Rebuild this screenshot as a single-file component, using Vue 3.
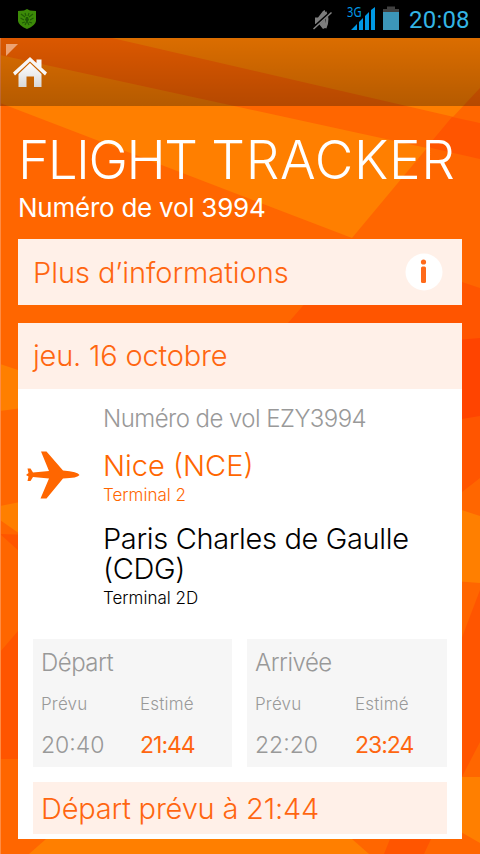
<template>
  <div class="screen">
    <svg class="backdrop" viewBox="0 0 480 854" width="480" height="854">
      <rect width="480" height="854" fill="#ff6600" />
      <polygon points="112,38 480,38 480,123" fill="#ff7f00" />
      <polygon points="0,55 427,148 352,238 0,103" fill="#ff7f00" />
      <polygon points="480,88 451,119 480,123" fill="#ff6600" />
      <polygon points="452,117 480,123 480,159 427,147" fill="#ff5500" />
      <polygon points="288,323 360,240 462,282 480,288 480,478 462,492 288,492" fill="#ff5500" />
      <polygon points="400,345 480,338 480,416 400,429" fill="#ff4400" />
      <polygon points="440,503 480,516 480,583 440,580" fill="#ff7f00" />
      <polygon points="480,590 450,669 450,800 480,742" fill="#ff5500" />
      <polygon points="440,777 480,777 480,843 440,820" fill="#ff7f00" />
      <polygon points="46,839 352,839 369,854 29,854" fill="#ff7f00" />
      <polygon points="390,839 431,839 424,854 384,854" fill="#ff5500" />
      <polygon points="0,364 30,374 30,407 0,411" fill="#ff7f00" />
      <polygon points="0,506 30,500 30,541 0,520" fill="#ff7f00" />
      <polygon points="0,534 30,535 30,561" fill="#ff5500" />
      <polygon points="0,652 30,617 30,759 0,759" fill="#ff5500" />
      <rect width="1" height="854" fill="#ff8c44" />
    </svg>

    <div class="statusbar">
      <svg class="shield" width="20" height="22" viewBox="0 0 20 22">
        <path d="M10 1 L13 2.4 L19 3 V13 Q18.500 17.500 10 21 Q1.500 17.500 1 13 V3 L7 2.400 Z" fill="#3c8a08" />
        <path d="M4 6 L8 9 M16 6 L12 9 M3.500 10 L7 12 M16.500 10 L13 12 M5 15 L8 14 M15 15 L12 14 M8 5 L9 8 M12 5 L11 8 M8 17 L10 13 L12 17" stroke="#1f5c05" stroke-width="1.200" fill="none" />
        <path d="M9 9 H11 L12 12 L10 14 L8 12 Z" fill="#1c5704" />
      </svg>
      <svg class="mute" width="20" height="22" viewBox="0 0 20 22">
        <path d="M2 8.500 H5 L10 2 L12 1 V19 L10 20 L6 15 H2 Z" fill="#7d7d7d" />
        <path d="M12 3 Q16 10 12 19" stroke="#7d7d7d" stroke-width="3" fill="none" />
        <path d="M0 19 L18 3" stroke="#000" stroke-width="2.500" />
        <path d="M0.500 20 L18.500 3.500" stroke="#858585" stroke-width="1.500" />
      </svg>
      <svg class="signal" width="29" height="30" viewBox="0 0 29 30">
        <text x="0" y="16" textLength="14.500" lengthAdjust="spacingAndGlyphs">3G</text>
        <path d="M4 29 L10 23 V29 Z M12 21 L16 17 V29 H12 Z M18 15 L22 11 V29 H18 Z M24 9 L28 6 V29 H24 Z" fill="#0099e5" />
      </svg>
      <svg class="battery" width="16" height="24" viewBox="0 0 16 24">
        <path d="M4 0.500 H12 V3 H16 V6 H0 V3 H4 Z" fill="#404040" />
        <rect y="6" width="16" height="18" fill="#3c96b9" />
      </svg>
      <span class="clock">20:08</span>
    </div>

    <div class="navbar">
      <svg width="48" height="58" viewBox="0 0 48 58">
        <defs>
          <linearGradient id="house" x1="0" y1="0" x2="0" y2="1">
            <stop offset="0" stop-color="#fff" />
            <stop offset="1" stop-color="#d8d8d8" />
          </linearGradient>
        </defs>
        <path d="M6 6 H18 L6 18 Z" fill="#eda272" />
        <path d="M30 19 L13 34.500 L15 37.500 L30 23.500 L45 37.500 L47 34.500 L41.500 29.500 V21.500 H36.500 V25 Z" fill="#f7f7f7" />
        <path d="M30 25 L41.500 36 V49 H34 V38.500 H26.500 V49 H18.500 V36 Z" fill="url(#house)" />
      </svg>
    </div>

    <div class="content">
      <h1><span class="flight">FLIGHT</span> <span class="tracker">TRACKER</span></h1>
      <h2>Numéro de vol 3994</h2>

      <div class="more-info">
        <span class="more-label">Plus d’informations</span>
        <svg width="38" height="38" viewBox="0 0 38 38">
          <circle cx="19" cy="19" r="18.500" fill="#fff" />
          <circle cx="18.500" cy="9" r="2.600" fill="#ff6a1a" />
          <rect x="16" y="13.500" width="5" height="16.500" rx="1.500" fill="#ff6a1a" />
        </svg>
      </div>

      <div class="card">
        <div class="date"><span>jeu. 16 octobre</span></div>
        <div class="route">
          <svg class="plane" width="54" height="48" viewBox="0 0 54 48">
            <path d="M15 0.500 H20.500 L37 19.500 Q52 20.500 53.500 24 Q52 27 37 27.500 L20.500 47.500 H14.500 L23 27.500 L7 26 L4.500 30 H1.500 L2.500 25.500 L0 24 L2.500 22 L1.500 17.500 H4.500 L7 21.500 L23 20 Z" fill="#ff6600" />
          </svg>
          <div class="places">
            <div class="number">Numéro de vol EZY3994</div>
            <div class="place from">Nice (NCE)</div>
            <div class="terminal from">Terminal 2</div>
            <div class="place to">Paris Charles de Gaulle (CDG)</div>
            <div class="terminal">Terminal 2D</div>
          </div>
        </div>
        <div class="times">
          <div v-for="leg in legs" :key="leg.title" class="leg">
            <div class="leg-title">{{ leg.title }}</div>
            <div class="leg-label">Prévu</div>
            <div class="leg-label">Estimé</div>
            <div class="leg-time">{{ leg.planned }}</div>
            <div class="leg-time estimated">{{ leg.estimated }}</div>
          </div>
        </div>
        <div class="status"><span>Départ prévu à 21:44</span></div>
      </div>
    </div>
  </div>
</template>

<script setup>
const legs = [
  { title: "Départ", planned: "20:40", estimated: "21:44" },
  { title: "Arrivée", planned: "22:20", estimated: "23:24" },
];
</script>

<style>
body {
  margin: 0;
  background: #ff6600;
}
</style>

<style scoped>
.screen {
  position: relative;
  width: 480px;
  height: 854px;
  overflow: hidden;
  font-family: Inter, "Liberation Sans", sans-serif;
  font-weight: 300;
  white-space: nowrap;
}

.backdrop {
  position: absolute;
  top: 0;
  left: 0;
}

.statusbar {
  position: relative;
  display: flex;
  height: 38px;
  background: #000;
}

.shield {
  margin: 8px 0 0 17px;
}

.mute {
  margin: 9px 0 0 276px;
}

.signal {
  margin: 1px 0 0 14px;
}

.signal text {
  font: 14px "Noto Sans", sans-serif;
  fill: #0099e5;
}

.battery {
  margin: 6px 0 0 7px;
}

.clock {
  margin-left: 10px;
  font: 400 24px/40px Roboto, sans-serif;
  letter-spacing: 0.2px;
  color: #33b5e5;
}

.navbar {
  position: relative;
  height: 68px;
  background: linear-gradient(rgba(0, 0, 0, 0.14), rgba(0, 0, 0, 0.29));
}

.content {
  position: relative;
  padding: 0 18px;
}

h1 {
  margin: 0;
  padding-top: 22px;
  font-size: 53px;
  line-height: 64px;
  font-weight: 280;
  color: #fff;
}

.flight {
  letter-spacing: -1.5px;
}

.tracker {
  letter-spacing: 0.7px;
}

h2 {
  margin: 0;
  font-size: 26px;
  line-height: 32px;
  font-weight: 380;
  letter-spacing: -0.25px;
  color: #fff;
}

.more-info {
  display: flex;
  align-items: center;
  justify-content: space-between;
  height: 66px;
  margin-top: 15px;
  padding: 0 19px 0 15px;
  background: #fff0e8;
  font-size: 29px;
  color: #ff6610;
}

.more-label {
  letter-spacing: -0.05px;
}

.card {
  height: 516px;
  margin-top: 18px;
  background: #fff;
}

.date {
  height: 66px;
  padding-left: 15px;
  background: #fff0e8;
  font-size: 29px;
  line-height: 66px;
  letter-spacing: -0.2px;
  color: #ff6610;
}

.route {
  display: flex;
  height: 250px;
}

.plane {
  margin: 62px 0 0 8px;
}

.places {
  width: 330px;
  padding-top: 15px;
  margin-left: 23px;
}

.number {
  font-size: 24px;
  line-height: 30px;
  letter-spacing: -0.55px;
  color: #999;
}

.place {
  font-size: 29px;
  line-height: 30px;
  color: #000;
  white-space: normal;
}

.number + .place {
  margin-top: 17px;
}

.to {
  margin-top: 18px;
  letter-spacing: -0.35px;
}

.terminal {
  margin-top: 4px;
  font-size: 17px;
  line-height: 21px;
  color: #000;
}

.from {
  color: #ff6600;
}

.times {
  display: grid;
  grid-template-columns: 199px 200px;
  column-gap: 15px;
  padding-left: 15px;
}

.leg {
  display: grid;
  grid-template-columns: 99px 1fr;
  grid-template-rows: 47px 35px 48px;
  align-items: center;
  box-sizing: border-box;
  height: 128px;
  padding-left: 8px;
  background: #f6f6f6;
  color: #999;
}

.leg:last-child {
  grid-template-columns: 100px 1fr;
}

.leg-title {
  grid-column: 1 / 3;
  font-size: 24px;
  letter-spacing: -0.5px;
}

.leg-label {
  font-size: 17px;
  letter-spacing: 0.2px;
}

.leg-time {
  font-size: 23px;
}

.estimated {
  color: #ff6610;
  font-weight: 380;
  letter-spacing: -1px;
}

.status {
  height: 52px;
  margin: 15px 15px 0;
  padding-left: 8px;
  background: #fff0e8;
  font-size: 29px;
  line-height: 53px;
  letter-spacing: -0.2px;
  color: #ff6610;
}
</style>
